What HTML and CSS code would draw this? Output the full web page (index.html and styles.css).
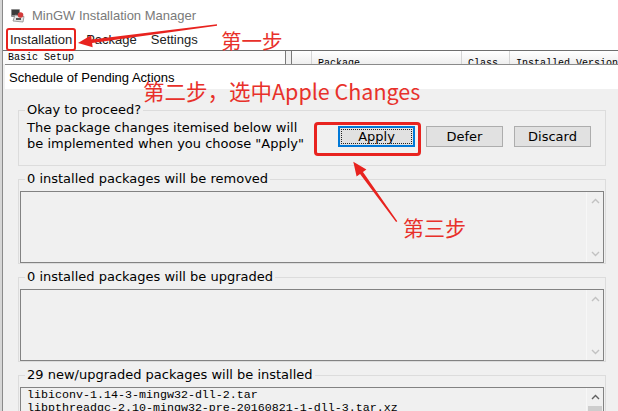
FILE: index.html
```html
<!DOCTYPE html>
<html>
<head>
<meta charset="utf-8">
<title>MinGW Installation Manager</title>
<link rel="stylesheet" href="styles.css">
</head>
<body>
<div class="screen">
  <div class="edge"></div>
  <div class="app">
    <div class="titlebar">
      <svg class="appicon" width="16" height="16" viewBox="0 0 16 16">
        <rect x="1" y="2" width="9" height="8" rx="1" fill="#8c8c8c"/>
        <rect x="2" y="3" width="7" height="5" fill="#3b3b3b"/>
        <path d="M5 8 L14 9.5 L13 15 L3 14 Z" fill="#e4e4e4" stroke="#8a8a8a" stroke-width="0.8"/>
        <circle cx="10.5" cy="8" r="2.8" fill="#d33a3a"/>
        <rect x="6" y="11" width="5" height="2" fill="#555"/>
      </svg>
      <span class="apptitle">MinGW Installation Manager</span>
    </div>
    <div class="menubar">
      <span class="menu">Installation</span>
      <span class="menu">Package</span>
      <span class="menu">Settings</span>
    </div>
    <div class="panes">
      <div class="leftpane">
        <div class="lp-head">Basic Setup</div>
      </div>
      <div class="splitter"></div>
      <div class="rightpane">
        <div class="thead">
          <span class="th c0"></span>
          <span class="th c1">Package</span>
          <span class="th c2">Class</span>
          <span class="th c3">Installed Version</span>
        </div>
      </div>
    </div>
  </div>

  <div class="dialog">
    <div class="dlg-title"><span class="dlg-title-text">Schedule of Pending Actions</span></div>
    <div class="dlg-body">
      <fieldset class="group">
        <legend>Okay to proceed?</legend>
        <div class="proceed-row">
          <div class="proceed-text">The package changes itemised below will<br>be implemented when you choose "Apply"</div>
          <div class="buttons">
            <span class="btn default">Apply</span>
            <span class="btn">Defer</span>
            <span class="btn">Discard</span>
          </div>
        </div>
      </fieldset>

      <fieldset class="group">
        <legend>0 installed packages will be removed</legend>
        <div class="list">
          <div class="list-body"></div>
          <div class="scroll">
            <span class="sbtn"><svg width="9" height="6" viewBox="0 0 9 6"><path d="M1 5 L4.5 1.5 L8 5" fill="none" stroke="#c2c2c2" stroke-width="1.4"/></svg></span>
            <span class="sbtn"><svg width="9" height="6" viewBox="0 0 9 6"><path d="M1 1 L4.5 4.5 L8 1" fill="none" stroke="#c2c2c2" stroke-width="1.4"/></svg></span>
          </div>
        </div>
      </fieldset>

      <fieldset class="group">
        <legend>0 installed packages will be upgraded</legend>
        <div class="list">
          <div class="list-body"></div>
          <div class="scroll">
            <span class="sbtn"><svg width="9" height="6" viewBox="0 0 9 6"><path d="M1 5 L4.5 1.5 L8 5" fill="none" stroke="#c2c2c2" stroke-width="1.4"/></svg></span>
            <span class="sbtn"><svg width="9" height="6" viewBox="0 0 9 6"><path d="M1 1 L4.5 4.5 L8 1" fill="none" stroke="#c2c2c2" stroke-width="1.4"/></svg></span>
          </div>
        </div>
      </fieldset>

      <fieldset class="group">
        <legend>29 new/upgraded packages will be installed</legend>
        <div class="list tall">
          <div class="list-body mono">libiconv-1.14-3-mingw32-dll-2.tar
libpthreadgc-2.10-mingw32-pre-20160821-1-dll-3.tar.xz
libgcc-6.3.0-1-mingw32-dll-1.tar.xz</div>
          <div class="scroll active">
            <span class="sbtn"><svg width="9" height="6" viewBox="0 0 9 6"><path d="M1 5 L4.5 1.5 L8 5" fill="none" stroke="#606060" stroke-width="1.4"/></svg></span>
            <span class="thumb"></span>
          </div>
        </div>
      </fieldset>
    </div>
  </div>

  <svg class="marks" width="618" height="411" viewBox="0 0 618 411">
    <polygon points="217,24.3 91.65,39.4 91.1,35.25 78,43 92.65,47.15 92.1,43 217,25.7" fill="#e8231f"/>
    <polygon points="397.3,221.2 362.96,172 366.4,169.5 353.3,161.7 356.6,176.6 360.04,174.1 396.1,222.1" fill="#e8231f"/>
  </svg>
  <div class="box box-install"></div>
  <div class="box box-apply"></div>
  <span class="note note1">第一步</span>
  <span class="note note2">第二步，选中Apple Changes</span>
  <span class="note note3">第三步</span>
</div>
</body>
</html>
```

FILE: styles.css
```css
* { box-sizing: border-box; }
html, body { margin: 0; padding: 0; }
body {
  width: 618px;
  height: 411px;
  overflow: hidden;
  background: #ffffff;
  font-family: "Liberation Sans", Arial, sans-serif;
  color: #000;
}
.screen {
  position: relative;
  width: 618px;
  height: 411px;
  overflow: hidden;
  display: flex;
}
.edge {
  width: 3px;
  flex: none;
  background: linear-gradient(90deg, #d6d6d6 0 2px, #8a8a8a 2px 3px);
}
.app {
  flex: 1;
  display: flex;
  flex-direction: column;
  background: #fff;
}
.titlebar {
  height: 28px;
  display: flex;
  align-items: center;
  padding-left: 7px;
  gap: 6px;
  padding-top: 2px;
}
.appicon { display: block; }
.apptitle {
  font-size: 13px;
  color: #7a7a7a;
}
.menubar {
  height: 22px;
  display: flex;
  align-items: center;
  padding-top: 1px;
  font-size: 13px;
  color: #222;
}
.menu { padding: 0 7px; }
.panes {
  flex: 1;
  display: flex;
  border-top: 1px solid #6e6e6e;
  background: #f0f0f0;
}
.leftpane { width: 282px; flex: none; }
.lp-head {
  height: 13px;
  padding-left: 5px;
  background: #fbfbfb;
  font-family: "Liberation Mono", monospace;
  font-size: 10px;
  line-height: 13px;
}
.splitter {
  width: 7px;
  flex: none;
  border-left: 1px solid #7a7a7a;
  border-right: 1px solid #7a7a7a;
  background: #f0f0f0;
}
.rightpane { flex: 1; min-width: 0; }
.thead {
  height: 13px;
  display: flex;
  background: linear-gradient(#ffffff, #efefef);
  overflow: hidden;
}
.th {
  flex: none;
  border-right: 1px solid #d5d5d5;
  padding: 7px 0 0 6px;
  font-family: "Liberation Mono", monospace;
  font-size: 10px;
  line-height: 12px;
  white-space: nowrap;
  overflow: hidden;
}
.c0 { width: 20px; }
.c1 { width: 150px; }
.c2 { width: 48px; }
.c3 { width: 140px; border-right: 0; }

.dialog {
  position: absolute;
  left: 5px;
  top: 64px;
  right: 0;
  bottom: 0;
  display: flex;
  flex-direction: column;
  border-top: 1px solid #8a8a8a;
}
.dlg-title {
  height: 24px;
  flex: none;
  background: #fff;
  padding-left: 4px;
  display: flex;
  align-items: center;
  font-size: 13px;
}
.dlg-title-text { line-height: 15px; }
.dlg-body {
  flex: 1;
  background: #f0f0f0;
  padding: 14px 12px 0 13px;
  font-family: "DejaVu Sans", Verdana, sans-serif;
  font-size: 13px;
}
.group {
  margin: 0;
  min-width: 0;
  border: 1px solid #dcdcdc;
  padding: 0 1px 0 1px;
}
.group + .group { margin-top: 6px; }
.group legend {
  margin-left: 5px;
  padding: 0 2px;
  font-size: 13px;
  line-height: 14px;
}
.proceed-row {
  display: flex;
  align-items: center;
  padding: 3px 13px 13px 7px;
}
.proceed-text { line-height: 16px; }
.buttons {
  margin-left: auto;
  display: flex;
  gap: 11px;
}
.btn {
  width: 77px;
  height: 21px;
  display: flex;
  align-items: center;
  justify-content: center;
  background: #e1e1e1;
  border: 1px solid #adadad;
  font-size: 13px;
}
.btn.default {
  border-color: #0078d7;
  box-shadow: inset 0 0 0 1px #0078d7;
  outline: 1px dotted #222;
  outline-offset: -4px;
}
.list {
  margin-top: 5px;
  height: 72px;
  border: 1px solid #828282;
  background: #f0f0f0;
  display: flex;
}
.list.tall { height: 110px; }
.list-body { flex: 1; min-width: 0; }
.mono {
  font-family: "Liberation Mono", monospace;
  font-size: 11.67px;
  line-height: 13px;
  padding: 1px 0 0 6px;
  white-space: pre;
  overflow: hidden;
}
.scroll {
  width: 17px;
  flex: none;
  display: flex;
  flex-direction: column;
  justify-content: space-between;
  border-left: 1px solid #f7f7f7;
}
.scroll.active { justify-content: flex-start; }
.sbtn {
  height: 17px;
  display: flex;
  align-items: center;
  justify-content: center;
}
.thumb {
  margin: 1px 1px 0 1px;
  height: 40px;
  background: #cdcdcd;
}

.marks {
  position: absolute;
  left: 0;
  top: 0;
  pointer-events: none;
}
.box {
  position: absolute;
  border-style: solid;
  border-color: #e8231f;
}
.box-install {
  left: 6px;
  top: 28px;
  width: 70px;
  height: 23px;
  border-width: 2px;
  border-radius: 3px;
}
.box-apply {
  left: 314px;
  top: 122px;
  width: 107px;
  height: 34px;
  border-width: 3px;
  border-radius: 4px;
}
.note {
  position: absolute;
  color: #e8302a;
  font-family: "Noto Sans CJK SC", "Noto Sans", sans-serif;
  line-height: 1;
  white-space: nowrap;
}
.note1 { left: 221px; top: 30px; font-size: 20.5px; }
.note2 { left: 143px; top: 80px; font-size: 21.5px; }
.note3 { left: 403px; top: 217px; font-size: 21px; }
```
